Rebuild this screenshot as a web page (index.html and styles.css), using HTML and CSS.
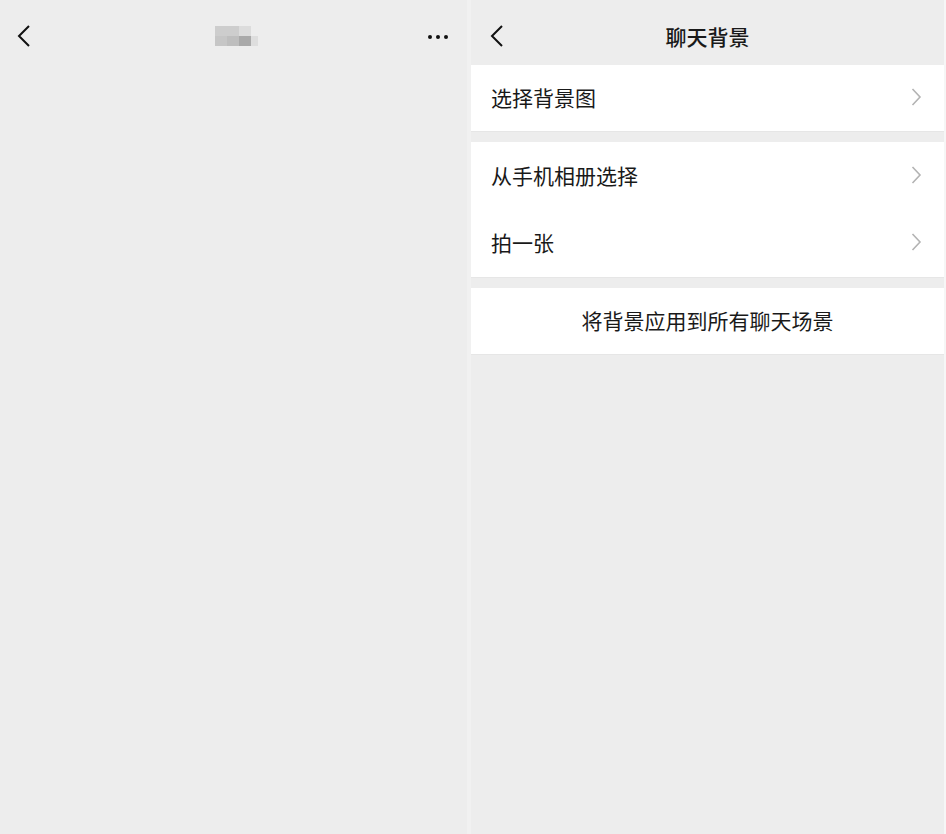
FILE: index.html
```html
<!DOCTYPE html>
<html lang="zh-CN">
<head>
    <meta charset="UTF-8">
    <meta name="viewport" content="width=device-width, initial-scale=1.0">
    <title>聊天背景</title>
    <link rel="stylesheet" href="styles.css">
</head>
<body>

<div class="screens">
    <!-- 聊天窗口（背景为空） -->
    <div class="screen chat">
        <div class="nav-bar">
            <svg class="back" width="14" height="24" viewBox="0 0 14 24">
                <path d="M12 2 L2 12 L12 22" fill="none" stroke="#111" stroke-width="2"/>
            </svg>
            <div class="mosaic">
                <span class="m1"></span><span class="m2"></span><span class="m0"></span>
                <span class="m3"></span><span class="m4"></span><span class="m5"></span><span class="m6"></span>
            </div>
            <div class="more">
                <span></span><span></span><span></span>
            </div>
        </div>
    </div>

    <div class="divider"></div>

    <!-- 聊天背景设置 -->
    <div class="screen settings">
        <div class="nav-bar">
            <svg class="back" width="14" height="24" viewBox="0 0 14 24">
                <path d="M12 2 L2 12 L12 22" fill="none" stroke="#111" stroke-width="2"/>
            </svg>
            <div class="title">聊天背景</div>
        </div>

        <div class="group">
            <div class="cell">
                <span>选择背景图</span>
                <svg class="arrow" width="11" height="20" viewBox="0 0 11 20">
                    <path d="M1.5 2 L9 10 L1.5 18" fill="none" stroke="#b3b3b3" stroke-width="1.6"/>
                </svg>
            </div>
        </div>

        <div class="group">
            <div class="cell tall">
                <span>从手机相册选择</span>
                <svg class="arrow" width="11" height="20" viewBox="0 0 11 20">
                    <path d="M1.5 2 L9 10 L1.5 18" fill="none" stroke="#b3b3b3" stroke-width="1.6"/>
                </svg>
            </div>
            <div class="cell tall">
                <span>拍一张</span>
                <svg class="arrow" width="11" height="20" viewBox="0 0 11 20">
                    <path d="M1.5 2 L9 10 L1.5 18" fill="none" stroke="#b3b3b3" stroke-width="1.6"/>
                </svg>
            </div>
        </div>

        <div class="group">
            <div class="cell center">将背景应用到所有聊天场景</div>
        </div>
    </div>

    <div class="edge"></div>
</div>

</body>
</html>
```

FILE: styles.css
```css
body {
    margin: 0;
    background-color: #ededed;
    font-family: "Noto Sans CJK SC", "Noto Sans", sans-serif;
    color: #191919;
}

.screens {
    display: flex;
    width: 946px;
    height: 834px;
}

.screen {
    height: 100%;
    background-color: #ededed;
}

.chat {
    width: 467px;
}

.settings {
    flex: 1;
}

.divider {
    width: 4px;
    background-color: #f1f1f1;
}

.edge {
    width: 2px;
    background-color: #f6f6f6;
}

.nav-bar {
    height: 65px;
    display: flex;
    align-items: center;
    position: relative;
}

.chat .nav-bar {
    padding: 0 19px 0 17px;
    justify-content: space-between;
}

.settings .nav-bar {
    padding-left: 19px;
}

.back {
    display: block;
    margin-top: 6px;
}

.title {
    position: absolute;
    left: 0;
    right: 0;
    top: 21px;
    text-align: center;
    font-size: 21px;
    font-weight: 500;
    line-height: 30px;
}

/* 打码的昵称 */
.mosaic {
    display: grid;
    grid-template-columns: 12px 12px 12px 7px;
    grid-template-rows: 10px 10px;
    margin-top: 6px;
    margin-left: 14px;
}

.mosaic span {
    display: block;
}

.m1 { background-color: #cdcdcd; grid-column: 1 / 3; }
.m2 { background-color: #dcdcdc; }
.m0 { background-color: #ededed; }
.m3 { background-color: #c6c6c6; }
.m4 { background-color: #bebebe; }
.m5 { background-color: #a9a9a9; }
.m6 { background-color: #dedede; }

.more {
    display: flex;
    gap: 4px;
    margin-top: 8px;
}

.more span {
    width: 4px;
    height: 4px;
    border-radius: 50%;
    background-color: #111;
}

.group {
    background-color: #fff;
    margin-bottom: 11px;
    box-shadow: 0 1px 0 #e6e6e6;
}

.cell {
    height: 66px;
    display: flex;
    align-items: center;
    justify-content: space-between;
    padding: 0 22px 2px 20px;
    box-sizing: border-box;
    font-size: 21px;
}

.cell.tall {
    height: 67.5px;
}

.cell.center {
    justify-content: center;
    padding: 0 0 2px;
}
```
